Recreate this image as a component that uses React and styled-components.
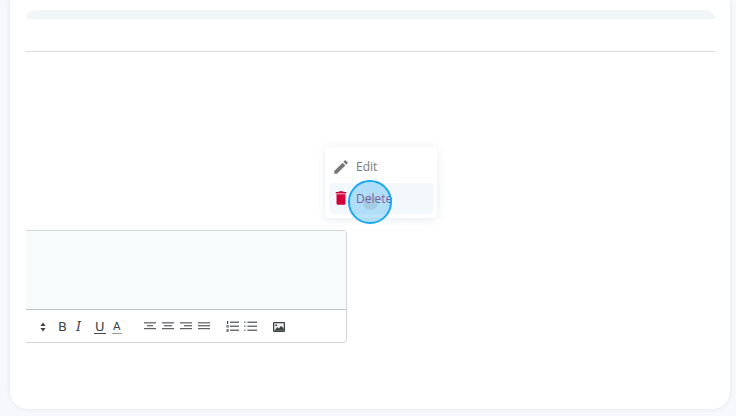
import React from 'react'
import styled, { createGlobalStyle } from 'styled-components'
import { MdEdit, MdDelete } from 'react-icons/md'

const GlobalStyle = createGlobalStyle`
    html, body {
        margin: 0;
        padding: 0;
        width: 736px;
        height: 416px;
        overflow: hidden;
        background: #f6f8fb;
        font-family: "Open Sans", "Liberation Sans", sans-serif;
    }
`

// small line icons of the editor toolbar
const Lines = ({ rows }) => (
    <svg width="12" height="10" viewBox="0 0 12 10">
        {rows.map(([x1, x2], i) => (
            <rect key={i} x={x1} y={i * 2.9 + 0.3} width={x2 - x1} height="1.1" fill="#4a4e52" />
        ))}
    </svg>
)

const SortIcon = () => (
    <svg width="6" height="10" viewBox="0 0 6 10">
        <path d="M3 0.5 L5.6 4 H0.4 Z M3 9.5 L5.6 6 H0.4 Z" fill="#3f4347" />
    </svg>
)

const OrderedIcon = () => (
    <svg width="13" height="11" viewBox="0 0 13 11">
        <rect x="4" y="0.6" width="9" height="1.2" fill="#4a4e52" />
        <rect x="4" y="4.6" width="9" height="1.2" fill="#4a4e52" />
        <rect x="4" y="8.6" width="9" height="1.2" fill="#4a4e52" />
        <rect x="1" y="0" width="1.2" height="3" fill="#3f4347" />
        <rect x="0.4" y="4" width="2.4" height="2.6" fill="#7a7e82" />
        <rect x="0.4" y="8" width="2.4" height="3" fill="#7a7e82" />
    </svg>
)

const BulletIcon = () => (
    <svg width="13" height="11" viewBox="0 0 13 11">
        <rect x="3.4" y="0.6" width="9.6" height="1.2" fill="#4a4e52" />
        <rect x="3.4" y="4.6" width="9.6" height="1.2" fill="#4a4e52" />
        <rect x="3.4" y="8.6" width="9.6" height="1.2" fill="#4a4e52" />
        <rect x="0" y="0.6" width="1.6" height="1.2" fill="#6a6e72" />
        <rect x="0" y="4.6" width="1.6" height="1.2" fill="#6a6e72" />
        <rect x="0" y="8.6" width="1.6" height="1.2" fill="#6a6e72" />
    </svg>
)

const ImageIcon = () => (
    <svg width="12" height="10" viewBox="0 0 12 10">
        <rect x="0" y="0" width="12" height="10" rx="1" fill="#3f4347" />
        <rect x="1.3" y="1.3" width="9.4" height="7.4" fill="#f4f4f4" />
        <circle cx="3.2" cy="3.2" r="1" fill="#3f4347" />
        <path d="M1.3 8.7 L4.4 5 L6 6.6 L8 3.8 L10.7 6.6 V8.7 Z" fill="#3f4347" />
    </svg>
)

function App() {
    return (
        <>
            <GlobalStyle />
            <Page>
                <Card>
                    <TopBar />
                    <Divider />
                    <Editor>
                        <EditorBody />
                        <Toolbar>
                            <ToolGroup>
                                <Tool><SortIcon /></Tool>
                                <Letter>B</Letter>
                                <Letter $italic>I</Letter>
                                <Letter><Underlined>U</Underlined></Letter>
                                <Letter $small><Underlined $light>A</Underlined></Letter>
                            </ToolGroup>
                            <ToolGroup $gap={14}>
                                <Tool><Lines rows={[[0, 12], [3, 9], [0, 12]]} /></Tool>
                                <Tool><Lines rows={[[0, 12], [2, 10], [0, 12]]} /></Tool>
                                <Tool><Lines rows={[[0, 12], [4, 12], [0, 12]]} /></Tool>
                                <Tool><Lines rows={[[0, 12], [0, 12], [0, 12]]} /></Tool>
                            </ToolGroup>
                            <ToolGroup $gap={10}>
                                <Tool><OrderedIcon /></Tool>
                                <Tool><BulletIcon /></Tool>
                            </ToolGroup>
                            <ToolGroup $gap={11}>
                                <Tool><ImageIcon /></Tool>
                            </ToolGroup>
                        </Toolbar>
                    </Editor>
                    <Menu>
                        <MenuItem>
                            <EditIcon />
                            <span>Edit</span>
                        </MenuItem>
                        <MenuItem $active>
                            <DeleteIcon />
                            <span>Delete</span>
                        </MenuItem>
                    </Menu>
                    <ClickRing>
                        <ClickDot />
                    </ClickRing>
                </Card>
            </Page>
        </>
    )
}

export default App

const Page = styled.div`
    box-sizing: border-box;
    width: 736px;
    height: 416px;
    padding: 0 6px 7px 10px;
`

const Card = styled.div`
    position: relative;
    box-sizing: border-box;
    height: 409px;
    padding: 10px 15px 0 16px;
    background: #ffffff;
    border-radius: 0 0 18px 18px;
    box-shadow: 0 0 4px rgba(150, 165, 190, 0.22);
`

const TopBar = styled.div`
    height: 9px;
    background: #f1f5f8;
    border-radius: 10px 10px 0 0;
`

const Divider = styled.div`
    height: 1px;
    margin-top: 32px;
    background: #dcdcdc;
`

const Editor = styled.div`
    width: 321px;
    margin-top: 178px;
    box-sizing: border-box;
    border: 1px solid #d4d6d8;
    border-left: none;
    border-radius: 0 4px 4px 0;
`

const EditorBody = styled.div`
    height: 78px;
    background: #f5fcfb;
    border-bottom: 1px solid #bfc2c2;
`

const Toolbar = styled.div`
    display: flex;
    align-items: center;
    height: 32px;
    padding: 1px 0 0 14px;
    box-sizing: border-box;
`

const ToolGroup = styled.div`
    display: flex;
    align-items: center;
    flex: 0 0 auto;
    margin-left: ${(p) => p.$gap || 0}px;
`

const Tool = styled.span`
    display: flex;
    align-items: center;
    width: 18px;
    flex: 0 0 auto;
`

const Letter = styled.span`
    display: block;
    width: 18px;
    flex: 0 0 auto;
    font-family: ${(p) => (p.$italic ? '"DejaVu Serif", serif' : '"DejaVu Sans", sans-serif')};
    font-size: ${(p) => (p.$small ? 11 : 13)}px;
    font-style: ${(p) => (p.$italic ? 'italic' : 'normal')};
    color: #3f4347;
    line-height: 13px;
`

const Underlined = styled.span`
    display: inline-block;
    line-height: ${(p) => (p.$light ? 10 : 11)}px;
    padding: 0 1px 1px;
    border-bottom: 1px solid ${(p) => (p.$light ? '#9a9da0' : '#45494d')};
`

const Menu = styled.div`
    position: absolute;
    left: 315px;
    top: 147px;
    box-sizing: border-box;
    width: 112px;
    height: 71px;
    padding: 4px;
    background: #ffffff;
    border-radius: 4px;
    box-shadow: 0 1px 8px rgba(130, 145, 170, 0.2);
`

const MenuItem = styled.div`
    display: flex;
    align-items: center;
    height: 31.5px;
    padding-left: 3px;
    font-size: 12px;
    color: ${(p) => (p.$active ? '#a83a78' : '#77797c')};
    border-radius: 3px;
    background: ${(p) => (p.$active ? '#f3f8fc' : 'transparent')};
`

const EditIcon = styled(MdEdit)`
    width: 18px;
    height: 18px;
    margin-right: 6px;
    color: #77787a;
    flex: 0 0 auto;
`

const DeleteIcon = styled(MdDelete)`
    width: 18px;
    height: 18px;
    margin-right: 6px;
    color: #d5003b;
    flex: 0 0 auto;
`

const ClickRing = styled.div`
    position: absolute;
    left: 338px;
    top: 180px;
    box-sizing: border-box;
    display: flex;
    align-items: center;
    justify-content: center;
    width: 44px;
    height: 44px;
    border: 2px solid #1aa8f0;
    border-radius: 50%;
    background: rgba(40, 170, 240, 0.33);
`

const ClickDot = styled.div`
    width: 15px;
    height: 15px;
    border-radius: 50%;
    background: rgba(120, 130, 150, 0.2);
`
